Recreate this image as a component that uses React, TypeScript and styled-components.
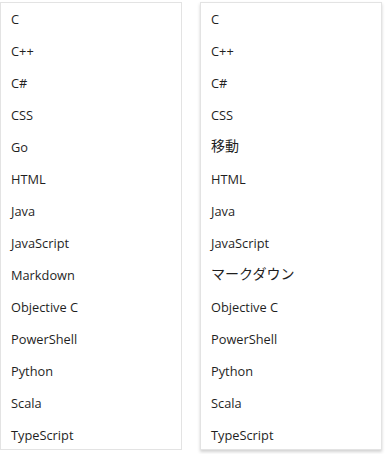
import React from "react";
import styled, { createGlobalStyle } from "styled-components";

const Global = createGlobalStyle`
  html, body { margin: 0; padding: 0; background: #ffffff; }
  body { font-family: "Open Sans", "Noto Sans CJK JP", sans-serif; }
`;

const Page = styled.div`
  display: flex;
  gap: 18px;
  padding: 2px 0 0 0;
  width: 390px;
  height: 454px;
  box-sizing: border-box;
  background: #fff;
`;

const Panel = styled.ul<{ $shadow?: boolean }>`
  list-style: none;
  margin: 0;
  padding: 0;
  width: 182px;
  height: 448px;
  box-sizing: border-box;
  border: 1px solid #e3e3e3;
  background: #fff;
  box-shadow: ${(p) => (p.$shadow ? "0 2px 3px rgba(0,0,0,0.18)" : "none")};
`;

const Item = styled.li<{ $cjk?: boolean }>`
  height: 32px;
  box-sizing: border-box;
  display: flex;
  align-items: center;
  padding-left: 10px;
  padding-bottom: ${(p) => (p.$cjk ? "4px" : "0")};
  font-family: "Open Sans", "Noto Sans CJK JP", sans-serif;
  font-size: ${(p) => (p.$cjk ? "14px" : "12.8px")};
  color: #1f1f1f;
  white-space: nowrap;
`;

const left = [
  "C", "C++", "C#", "CSS", "Go", "HTML", "Java", "JavaScript", "Markdown",
  "Objective C", "PowerShell", "Python", "Scala", "TypeScript",
];
const right: [string, boolean][] = [
  ["C", false], ["C++", false], ["C#", false], ["CSS", false], ["移動", true],
  ["HTML", false], ["Java", false], ["JavaScript", false], ["マークダウン", true],
  ["Objective C", false], ["PowerShell", false], ["Python", false], ["Scala", false],
  ["TypeScript", false],
];

export default function App() {
  return (
    <>
      <Global />
      <Page>
        <Panel>
          {left.map((t) => (
            <Item key={t}>{t}</Item>
          ))}
        </Panel>
        <Panel $shadow>
          {right.map(([t, cjk]) => (
            <Item key={t} $cjk={cjk}>{t}</Item>
          ))}
        </Panel>
      </Page>
    </>
  );
}
